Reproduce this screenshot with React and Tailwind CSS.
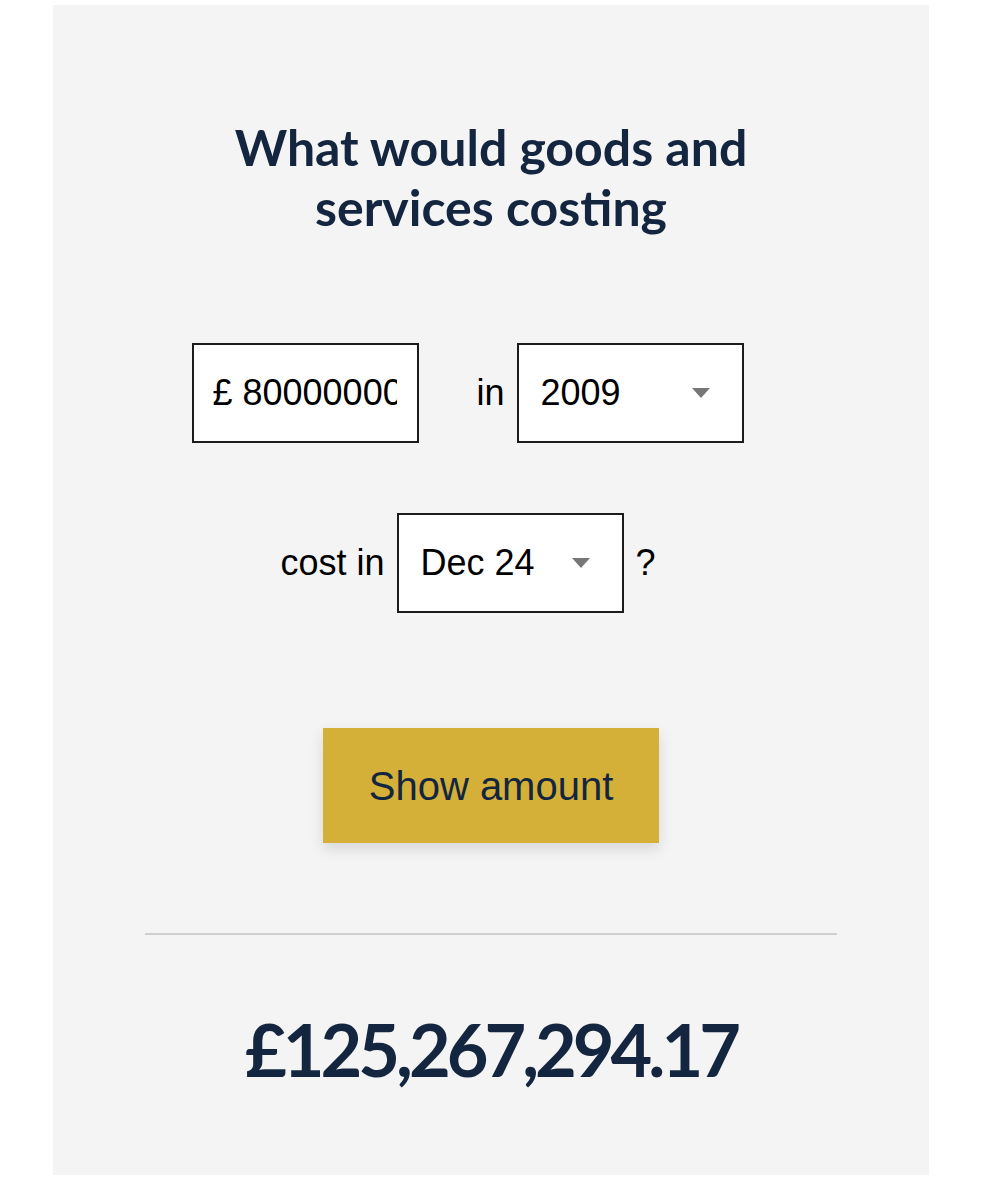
import React from "react";

const navy = "text-[#13253f]";

function Caret() {
  return (
    <svg width="18" height="10" viewBox="0 0 18 10" className="shrink-0">
      <path d="M0 0 L18 0 L9 10 Z" fill="#777777" />
    </svg>
  );
}

function SelectBox({ value }) {
  return (
    <div className="flex h-[100px] w-[227px] items-center justify-between border-2 border-[#1c1c1c] bg-white pl-[22px] pr-[32px]">
      <span className="text-[36px] leading-none text-black">{value}</span>
      <Caret />
    </div>
  );
}

export default function App() {
  return (
    <div className="min-h-[1200px] bg-white pt-[5px]" style={{ fontFamily: '"Liberation Sans", Arial, sans-serif' }}>
      <div className="ml-[53px] flex h-[1170px] w-[876px] flex-col items-center bg-[#f4f4f4]">
        <h1
          className={`mt-[112px] text-center text-[50px] font-bold leading-[60px] ${navy}`}
          style={{ fontFamily: 'Lato, "Open Sans", sans-serif' }}
        >
          What would goods and
          <br />
          services costing
        </h1>

        {/* amount + base year */}
        <div className="mt-[106px] flex items-center pr-[46px]">
          <div className="flex h-[100px] w-[227px] items-center border-2 border-[#1c1c1c] bg-white pl-[18px] pr-[20px]">
            <span className="block overflow-hidden whitespace-nowrap text-[36px] leading-none text-black">
              £ 80000000
            </span>
          </div>
          <span className="ml-[57px] mr-[12px] text-[36px] leading-none text-black">in</span>
          <SelectBox value="2009" />
        </div>

        {/* target date */}
        <div className="mt-[70px] flex items-center pr-[46px]">
          <span className="mr-[12px] text-[36px] leading-none text-black">cost in</span>
          <SelectBox value="Dec 24" />
          <span className="ml-[12px] text-[36px] leading-none text-black">?</span>
        </div>

        <button
          className={`mt-[115px] h-[115px] w-[336px] bg-[#d4b038] text-[40px] ${navy} shadow-[0_6px_14px_rgba(0,0,0,0.12)]`}
        >
          Show amount
        </button>

        <div className="mt-[90px] h-[2px] w-[692px] bg-[#cfcfcf]" />

        <div
          className={`mt-[78px] text-[72px] font-bold leading-none tracking-[-4px] ${navy}`}
          style={{ fontFamily: 'Lato, "Open Sans", sans-serif' }}
        >
          £125,267,294.17
        </div>
      </div>
    </div>
  );
}
